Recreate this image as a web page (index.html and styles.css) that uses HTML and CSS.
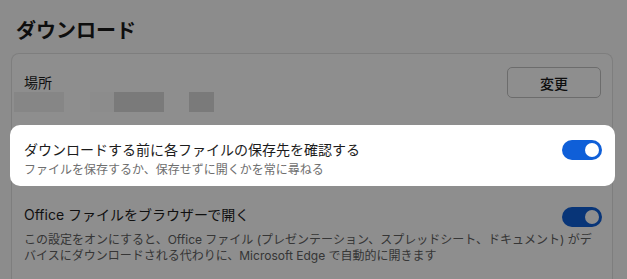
FILE: index.html
```html
<!DOCTYPE html>
<html lang="ja">
<head>
<meta charset="utf-8">
<title>ダウンロード</title>
<link rel="stylesheet" href="styles.css">
</head>
<body>
<div class="page">
  <h1 class="heading">ダウンロード</h1>
  <section class="card">
    <div class="location">
      <div class="location-info">
        <div class="label">場所</div>
        <div class="redacted">
          <span class="blk b1"></span>
          <span class="blk b2"></span>
          <span class="blk b3"></span>
          <span class="blk b4"></span>
        </div>
      </div>
      <button class="btn">変更</button>
    </div>
    <div class="setting spotlight">
      <div class="setting-head">
        <div class="texts">
          <div class="title">ダウンロードする前に各ファイルの保存先を確認する</div>
          <div class="sub">ファイルを保存するか、保存せずに開くかを常に尋ねる</div>
        </div>
        <span class="toggle on"><span class="knob"></span></span>
      </div>
    </div>
    <div class="setting office">
      <div class="setting-head">
        <div class="title">Office ファイルをブラウザーで開く</div>
        <span class="toggle on"><span class="knob"></span></span>
      </div>
      <div class="desc">この設定をオンにすると、Office ファイル (プレゼンテーション、スプレッドシート、ドキュメント) がデ<br>バイスにダウンロードされる代わりに、Microsoft Edge で自動的に開きます</div>
    </div>
  </section>
</div>
</body>
</html>
```

FILE: styles.css
```css
html, body {
  margin: 0;
  padding: 0;
}
body {
  background: #fbfbfb;
  font-family: Inter, "Noto Sans CJK JP", sans-serif;
  color: #1c1c1c;
  overflow: hidden;
  width: 627px;
  height: 279px;
}
.page {
  padding: 17px 14px 0 11px;
}
.heading {
  margin: 0 0 8px 5px;
  font-size: 20px;
  line-height: 28px;
  font-weight: 700;
  color: #1a1a1a;
}
.card {
  background: #ffffff;
  border: 1px solid #e3e3e3;
  border-bottom: 0;
  border-radius: 8px 8px 0 0;
  height: 225px;
}
.location {
  display: flex;
  justify-content: space-between;
  align-items: flex-start;
  padding: 13px 11px 0 12px;
}
.label {
  margin-top: 7px;
  font-size: 14px;
  line-height: 18px;
}
.redacted {
  display: flex;
  margin-left: -10px;
  height: 20px;
}
.blk {
  display: block;
  height: 20px;
}
.b1 { width: 50px; background: #f1f1f1; }
.b2 { width: 24px; margin-left: 26px; background: #fcfcfc; }
.b3 { width: 50px; background: #dbdbdb; }
.b4 { width: 25px; margin-left: 25px; background: #dcdcdc; }
.btn {
  width: 94px;
  height: 31px;
  background: #ffffff;
  border: 1px solid #c2c2c2;
  border-radius: 5px;
  font-family: inherit;
  font-size: 14px;
  font-weight: 500;
  color: #1a1a1a;
  padding: 0;
}
.setting-head {
  display: flex;
  justify-content: space-between;
  align-items: flex-start;
}
.spotlight {
  position: relative;
  z-index: 1;
  margin: 13px -3px 0 -2px;
  padding: 15px 13px 7px 14px;
  background: #ffffff;
  border-radius: 10px;
  box-shadow: 0 0 0 3000px rgba(0, 0, 0, 0.443);
}
.title {
  font-size: 14px;
  line-height: 20px;
  color: #1c1c1c;
}
.sub {
  margin-top: 1px;
  font-size: 12px;
  line-height: 18px;
  color: #6e6e6e;
}
.toggle {
  display: flex;
  align-items: center;
  justify-content: flex-end;
  box-sizing: border-box;
  width: 40px;
  height: 20px;
  border-radius: 10px;
  background: #0f5fd8;
  padding: 0 3px;
}
.knob {
  display: block;
  width: 14px;
  height: 14px;
  border-radius: 50%;
  background: #ffffff;
}
.office {
  padding: 19px 10px 0 12px;
}
.office .toggle {
  margin-top: 2px;
}
.desc {
  margin-top: 5px;
  font-size: 12px;
  line-height: 16px;
  color: #616161;
  white-space: nowrap;
}
```
